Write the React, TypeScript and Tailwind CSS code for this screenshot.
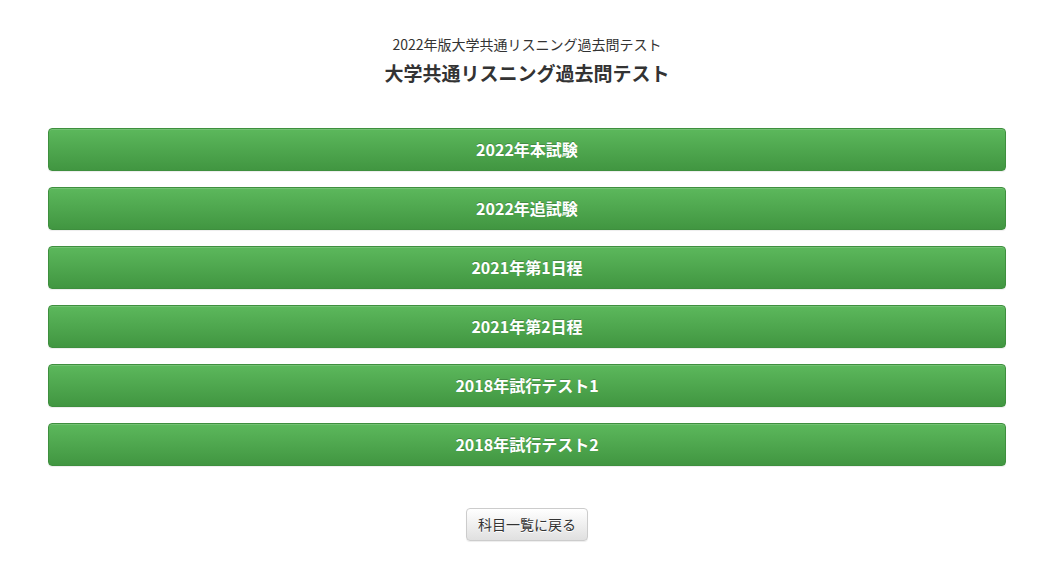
import React from "react";

const tests = [
  "2022年本試験",
  "2022年追試験",
  "2021年第1日程",
  "2021年第2日程",
  "2018年試行テスト1",
  "2018年試行テスト2",
];

export default function App() {
  return (
    <div
      className="min-h-[574px] bg-white pl-[48px] pr-[44px] text-[#333]"
      style={{ fontFamily: '"Noto Sans CJK JP", "Noto Sans", sans-serif' }}
    >
      {/* Header */}
      <div className="pt-[34px] text-center">
        <p className="text-[14px] leading-[20px] text-[#333]">2022年版大学共通リスニング過去問テスト</p>
        <h1 className="mt-[6px] text-[19px] font-bold leading-[26px] text-[#333]">
          大学共通リスニング過去問テスト
        </h1>
      </div>

      {/* Test list */}
      <div className="mt-[42px] flex flex-col gap-[16px]">
        {tests.map((t) => (
          <button
            key={t}
            className="h-[43px] w-full rounded-[4px] border border-[#3e8f3e] bg-gradient-to-b from-[#5cb85c] to-[#419641] pb-[2px] text-[16px] font-bold text-white shadow-[inset_0_1px_0_rgba(255,255,255,0.15),0_1px_1px_rgba(0,0,0,0.075)] [text-shadow:0_-1px_0_rgba(0,0,0,0.2)]"
          >
            {t}
          </button>
        ))}
      </div>

      {/* Back */}
      <div className="mt-[42px] flex justify-center">
        <button className="h-[33px] w-[122px] rounded-[4px] border border-[#ccc] bg-gradient-to-b from-white to-[#e0e0e0] text-[14px] text-[#333] shadow-[inset_0_1px_0_rgba(255,255,255,0.15),0_1px_1px_rgba(0,0,0,0.075)] [text-shadow:0_1px_0_#fff]">
          科目一覧に戻る
        </button>
      </div>
    </div>
  );
}
